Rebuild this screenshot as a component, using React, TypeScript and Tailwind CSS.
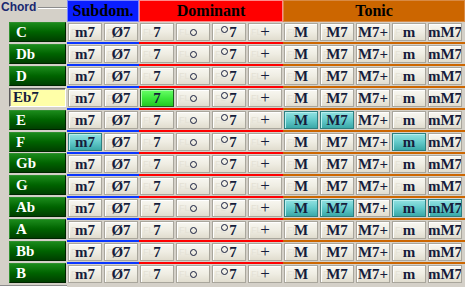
import React from 'react';

type Tone = 'plain' | 'teal' | 'green';

const chords = ['C', 'Db', 'D', 'Eb7', 'E', 'F', 'Gb', 'G', 'Ab', 'A', 'Bb', 'B'];
const selected = 'Eb7';

// 0 m7, 1 Ø7, 2 7, 3 o, 4 o7, 5 +, 6 M, 7 M7, 8 M7+, 9 m, 10 mM7
const columns = ['m7', 'Ø7', '7', 'o', 'o7', '+', 'M', 'M7', 'M7+', 'm', 'mM7'];

const marks: Record<number, Record<number, Tone>> = {
  3: { 2: 'green' },
  4: { 6: 'teal', 7: 'teal' },
  5: { 0: 'teal', 9: 'teal' },
  8: { 6: 'teal', 7: 'teal', 9: 'teal', 10: 'teal' },
};

const serif = "font-['Liberation_Serif',serif]";

const Label: React.FC<{ text: string }> = ({ text }) => {
  if (text === 'o') {
    return <span className="inline-block w-[7px] h-[7px] rounded-full border border-current mt-[1px]" />;
  }
  if (text === 'o7') {
    return (
      <span className="flex items-start">
        <span className="inline-block w-[7px] h-[7px] rounded-full border border-current mt-[2px] mr-[1px]" />
        <span>7</span>
      </span>
    );
  }
  if (text === '+') return <span className="font-normal text-[17px]">+</span>;
  return <span>{text}</span>;
};

const ChordButton: React.FC<{ label: string; tone: Tone }> = ({ label, tone }) => {
  const toneClass =
    tone === 'teal'
      ? 'bg-gradient-to-b from-[#92e2e2] via-[#62caca] to-[#3aa8a8] border-[#2e7f80] shadow-[inset_1px_1px_0_#b8f0f0]'
      : tone === 'green'
      ? 'bg-gradient-to-b from-[#66ff66] via-[#3de83d] to-[#22c822] border-[#1e5a1e] shadow-[inset_1px_1px_0_#a8ffa8]'
      : 'bg-gradient-to-b from-[#f8f7f1] via-[#efede3] to-[#e1ddcf] border-[#a9a69c] shadow-[inset_1px_1px_0_#ffffff]';
  return (
    <div className="w-[36px] pl-[1px]">
      <div className={`relative w-[34px] h-[18px] border flex items-center justify-center overflow-hidden ${toneClass}`}>
        {/* faint watermark on plain keys */}
        {tone === 'plain' && (
          <span className="absolute left-[2px] top-[3px] text-[9px] leading-[10px] font-['Liberation_Sans',sans-serif] text-[#e4e1d5]">
            FL
          </span>
        )}
        <span className={`relative ${serif} font-bold text-[15px] leading-[16px] text-[#161d3c] whitespace-nowrap flex items-center`}>
          <Label text={label} />
        </span>
      </div>
    </div>
  );
};

export default function App() {
  return (
    <div className="w-[465px] h-[287px] bg-[#d4d0c8] flex overflow-hidden">
      {/* Chord group */}
      <div className="w-[67px] flex flex-col">
        <div className="h-[22px] flex items-start">
          <span className="pl-[1px] text-[12px] leading-[14px] font-bold font-['Liberation_Sans',sans-serif] text-[#1a2870]">
            Chord
          </span>
          <div className="flex-1 ml-[2px] mt-[7px] h-[2px] border-t border-[#8c8c8c] border-b border-b-white" />
        </div>
        {chords.map((c) => (
          <div key={c} className="h-[22px] pl-[9px]">
            {c === selected ? (
              <div className="w-[57px] h-[19px] bg-[#ffffa8] border border-t-[#5a5a5a] border-l-[#5a5a5a] border-r-white border-b-white shadow-[inset_1px_1px_0_#9a9a9a] flex items-center pl-[3px]">
                <span className={`${serif} font-bold text-[15px] leading-[16px] text-[#161d3c]`}>{c}</span>
              </div>
            ) : (
              <div className="w-[57px] h-[20px] bg-gradient-to-b from-[#1a8a1a] via-[#006300] to-[#003f00] border border-t-[#2f8f2f] border-l-[#2f8f2f] border-r-[#002400] border-b-[#002400] flex items-center pl-[6px]">
                <span className={`${serif} font-bold text-[15px] leading-[16px] text-white`}>{c}</span>
              </div>
            )}
          </div>
        ))}
        <div className="border-t border-[#8c8c8c] border-b border-b-white" />
      </div>

      {/* Function table */}
      <div className="w-[398px] flex flex-col">
        <div className={`h-[22px] flex ${serif} font-bold text-[16px] text-black`}>
          <div className="w-[72px] bg-[#0a1eff] border border-[#7a86ff] flex items-center justify-center">Subdom.</div>
          <div className="w-[144px] bg-[#ff0000] border border-[#ff8a8a] flex items-center justify-center">Dominant</div>
          <div className="flex-1 bg-[#cc6600] border border-[#d88a44] flex items-center justify-center">Tonic</div>
        </div>
        {chords.map((c, r) => (
          <div key={c} className="flex flex-col">
            <div className="h-[20px] flex items-center">
              {columns.map((col, i) => (
                <ChordButton key={col} label={col} tone={marks[r]?.[i] ?? 'plain'} />
              ))}
            </div>
            {r < chords.length - 1 && (
              <div className="h-[2px] flex">
                <div className="w-[72px] bg-[#0a36ff]" />
                <div className="w-[144px] bg-[#ff0000]" />
                <div className="flex-1 bg-[#cc6600]" />
              </div>
            )}
          </div>
        ))}
      </div>
    </div>
  );
}
